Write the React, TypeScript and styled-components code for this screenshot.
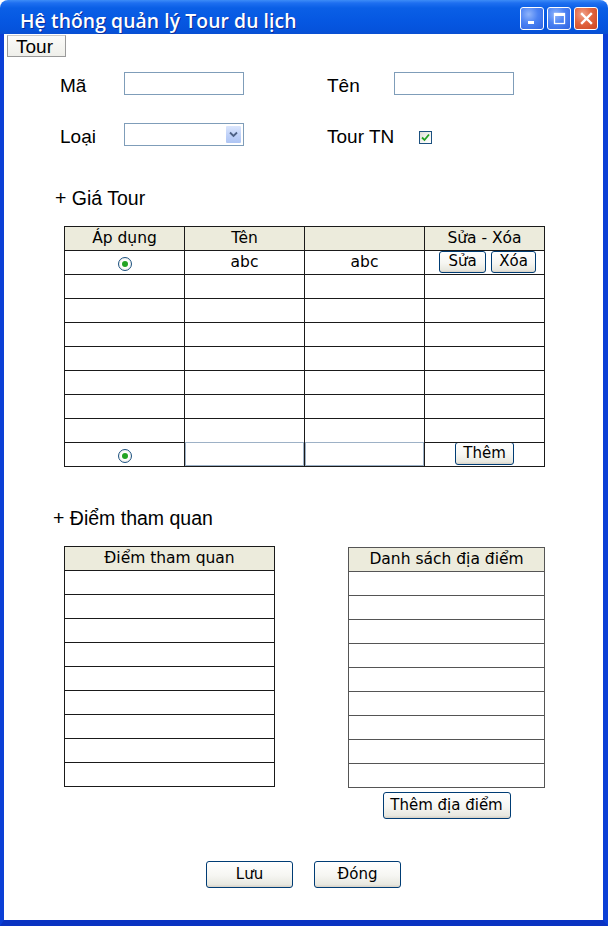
import React from "react";
import styled, { createGlobalStyle } from "styled-components";

const GlobalStyle = createGlobalStyle`
  html, body { margin: 0; padding: 0; background: #ffffff; }
  * { box-sizing: border-box; }
`;

const Window = styled.div`
  width: 608px;
  height: 926px;
  display: flex;
  flex-direction: column;
  background: #ffffff;
  font-family: "Liberation Sans", Arial, sans-serif;
  color: #000;
`;

const TitleBar = styled.div`
  height: 34px;
  flex: none;
  display: flex;
  align-items: center;
  padding: 4px 10px 0 20px;
  border-radius: 8px 8px 0 0;
  background: linear-gradient(
    180deg,
    #3d8cf7 0px,
    #1e6ff0 3px,
    #0a5fe6 8px,
    #0658e2 20px,
    #0553dc 30px,
    #0a4fd2 34px
  );
`;

const TitleText = styled.div`
  flex: 1;
  color: #ffffff;
  font-family: "Open Sans", "DejaVu Sans", sans-serif;
  font-weight: 600;
  font-size: 19.3px;
  letter-spacing: 0.1px;
  padding-top: 3px;
  text-shadow: 1px 1px 0 #0b2c9a;
  white-space: nowrap;
`;

const TitleButtons = styled.div`
  display: flex;
  gap: 3px;
  margin-top: -1px;
`;

const TitleButton = styled.div<{ $close?: boolean }>`
  width: 24px;
  height: 23px;
  border: 1px solid #ffffff;
  border-radius: 3px;
  display: flex;
  align-items: center;
  justify-content: center;
  background: ${(p) =>
    p.$close
      ? "radial-gradient(circle at 35% 30%, #f0a28a 0%, #e2653f 45%, #cc4420 100%)"
      : "radial-gradient(circle at 35% 30%, #8fb4fb 0%, #4b82f3 45%, #2f63e0 100%)"};
`;

const Body = styled.div`
  flex: 1;
  display: flex;
  flex-direction: column;
  border-left: 4px solid #0b3fd6;
  border-right: 5px solid #0b3fd6;
  border-bottom: 6px solid #0a33c2;
`;

const Tab = styled.div`
  margin: 1px 0 0 3px;
  width: 59px;
  height: 22px;
  padding-left: 8px;
  line-height: 21px;
  font-size: 19px;
  background: linear-gradient(180deg, #fbfbf9 0%, #efefea 100%);
  border: 1px solid #9a9a9a;
  border-top-color: #c8c8c8;
`;

const Form = styled.div`
  margin-top: 15px;
  padding-left: 56px;
  display: grid;
  grid-template-columns: 64px 120px 83px 67px 120px;
  grid-auto-rows: 23px;
  row-gap: 28px;
  align-items: center;
`;

const Label = styled.div`
  font-size: 19px;
  line-height: 23px;
  padding-top: 3px;
  white-space: nowrap;
`;

const TextBox = styled.div`
  height: 23px;
  border: 1px solid #7f9db9;
  background: #ffffff;
`;

const SelectBox = styled.div`
  height: 23px;
  border: 1px solid #7f9db9;
  background: #ffffff;
  display: flex;
  justify-content: flex-end;
  padding: 1px;
`;

const SelectArrow = styled.div`
  width: 17px;
  height: 19px;
  border-radius: 2px;
  border: 1px solid #ffffff;
  background: linear-gradient(180deg, #dbe6fd 0%, #bccff8 60%, #aec5f3 100%);
  display: flex;
  align-items: center;
  justify-content: center;
`;

const CheckBox = styled.div`
  width: 13px;
  height: 13px;
  margin-left: 25px;
  margin-top: 6px;
  border: 1px solid #1c5180;
  background: linear-gradient(135deg, #dcdcd5 0%, #f6f6f3 60%, #ffffff 100%);
  display: flex;
  align-items: center;
  justify-content: center;
`;

const SectionTitle = styled.div<{ $indent: number; $top: number }>`
  margin-top: ${(p) => p.$top}px;
  padding-left: ${(p) => p.$indent}px;
  font-size: 19.5px;
  line-height: 24px;
  white-space: nowrap;
`;

const Grid = styled.div<{ $cols: string; $left?: number; $top: number; $line: string }>`
  margin-top: ${(p) => p.$top}px;
  margin-left: ${(p) => p.$left ?? 0}px;
  display: grid;
  grid-template-columns: ${(p) => p.$cols};
  grid-auto-rows: 23px;
  gap: 1px;
  background: ${(p) => p.$line};
  border: 1px solid ${(p) => p.$line};
  align-self: flex-start;
`;

const Cell = styled.div<{ $head?: boolean; $shift?: number }>`
  background: ${(p) => (p.$head ? "#ecebdc" : "#ffffff")};
  display: flex;
  align-items: center;
  justify-content: center;
  gap: 5px;
  padding-left: ${(p) => p.$shift ?? 0}px;
  padding-bottom: 2px;
  font-family: "DejaVu Sans", sans-serif;
  font-size: 15.5px;
  line-height: 20px;
  white-space: nowrap;
  overflow: hidden;
`;

const InputCell = styled.div`
  background: #ffffff;
  border: 1px solid #9db1c6;
  margin: -1px 0 0 0;
  height: 24px;
`;

const Radio = styled.div`
  width: 14px;
  height: 14px;
  border-radius: 50%;
  border: 1px solid #1c5180;
  background: radial-gradient(circle, #ffffff 40%, #e6e6e0 100%);
  display: flex;
  align-items: center;
  justify-content: center;
  margin-top: 5px;
  &::after {
    content: "";
    width: 6px;
    height: 6px;
    border-radius: 50%;
    background: #22a322;
  }
`;

const Button = styled.button<{ $w: number; $h: number }>`
  width: ${(p) => p.$w}px;
  height: ${(p) => p.$h}px;
  padding: 0;
  border: 1px solid #003c74;
  border-radius: 3px;
  background: linear-gradient(180deg, #ffffff 0%, #f6f6f2 55%, #e8e8e0 90%, #d6d0c5 100%);
  font-family: "DejaVu Sans", sans-serif;
  font-size: 15px;
  color: #000;
  line-height: 1;
`;

const Lists = styled.div`
  display: flex;
  margin-top: 16px;
  padding-left: 60px;
  gap: 73px;
`;

const ListColumn = styled.div`
  display: flex;
  flex-direction: column;
  align-items: center;
  gap: 4px;
`;

const Footer = styled.div`
  margin-top: auto;
  padding-bottom: 32px;
  display: flex;
  justify-content: center;
  gap: 21px;
`;

const MinIcon = () => (
  <svg width="13" height="13" viewBox="0 0 13 13">
    <rect x="2" y="9" width="6" height="3" fill="#fff" />
  </svg>
);
const MaxIcon = () => (
  <svg width="13" height="13" viewBox="0 0 13 13">
    <rect x="1.5" y="1.5" width="10" height="10" fill="none" stroke="#fff" strokeWidth="1.3" />
    <rect x="1.5" y="1.5" width="10" height="2.5" fill="#fff" />
  </svg>
);
const CloseIcon = () => (
  <svg width="13" height="13" viewBox="0 0 13 13">
    <path d="M2 2 L11 11 M11 2 L2 11" stroke="#fff" strokeWidth="2.4" strokeLinecap="square" />
  </svg>
);
const Chevron = () => (
  <svg width="9" height="7" viewBox="0 0 9 7">
    <path d="M1 1.5 L4.5 5 L8 1.5" fill="none" stroke="#4d6185" strokeWidth="1.8" />
  </svg>
);
const Check = () => (
  <svg width="9" height="9" viewBox="0 0 9 9">
    <path d="M1 4.5 L3.5 7 L8 1.5" fill="none" stroke="#21a121" strokeWidth="1.8" />
  </svg>
);

export default function App() {
  const emptyRows = Array.from({ length: 7 });
  const listRows = Array.from({ length: 9 });
  return (
    <>
      <GlobalStyle />
      <Window>
        <TitleBar>
          <TitleText>Hệ thống quản lý Tour du lịch</TitleText>
          <TitleButtons>
            <TitleButton><MinIcon /></TitleButton>
            <TitleButton><MaxIcon /></TitleButton>
            <TitleButton $close><CloseIcon /></TitleButton>
          </TitleButtons>
        </TitleBar>
        <Body>
          <Tab>Tour</Tab>
          <Form>
            <Label>Mã</Label>
            <TextBox />
            <div />
            <Label>Tên</Label>
            <TextBox />
            <Label>Loại</Label>
            <SelectBox>
              <SelectArrow><Chevron /></SelectArrow>
            </SelectBox>
            <div />
            <Label>Tour TN</Label>
            <CheckBox><Check /></CheckBox>
          </Form>

          <SectionTitle $indent={51} $top={40}>+ Giá Tour</SectionTitle>
          <Grid $cols="repeat(4, 119px)" $left={60} $top={16} $line="#1a1a1a">
            <Cell $head>Áp dụng</Cell>
            <Cell $head>Tên</Cell>
            <Cell $head></Cell>
            <Cell $head>Sửa - Xóa</Cell>

            <Cell><Radio /></Cell>
            <Cell>abc</Cell>
            <Cell>abc</Cell>
            <Cell $shift={6}>
              <Button $w={47} $h={22}>Sửa</Button>
              <Button $w={45} $h={22}>Xóa</Button>
            </Cell>

            {emptyRows.map((_, i) => (
              <React.Fragment key={i}>
                <Cell />
                <Cell />
                <Cell />
                <Cell />
              </React.Fragment>
            ))}

            <Cell><Radio /></Cell>
            <InputCell />
            <InputCell />
            <Cell>
              <Button $w={59} $h={23}>Thêm</Button>
            </Cell>
          </Grid>

          <SectionTitle $indent={49} $top={39}>+ Điểm tham quan</SectionTitle>
          <Lists>
            <Grid $cols="209px" $top={0} $line="#1a1a1a">
              <Cell $head>Điểm tham quan</Cell>
              {listRows.map((_, i) => (
                <Cell key={i} />
              ))}
            </Grid>
            <ListColumn>
              <Grid $cols="195px" $top={1} $line="#555555">
                <Cell $head>Danh sách địa điểm</Cell>
                {listRows.map((_, i) => (
                  <Cell key={i} />
                ))}
              </Grid>
              <Button $w={128} $h={27}>Thêm địa điểm</Button>
            </ListColumn>
          </Lists>

          <Footer>
            <Button $w={87} $h={27}>Lưu</Button>
            <Button $w={87} $h={27}>Đóng</Button>
          </Footer>
        </Body>
      </Window>
    </>
  );
}
